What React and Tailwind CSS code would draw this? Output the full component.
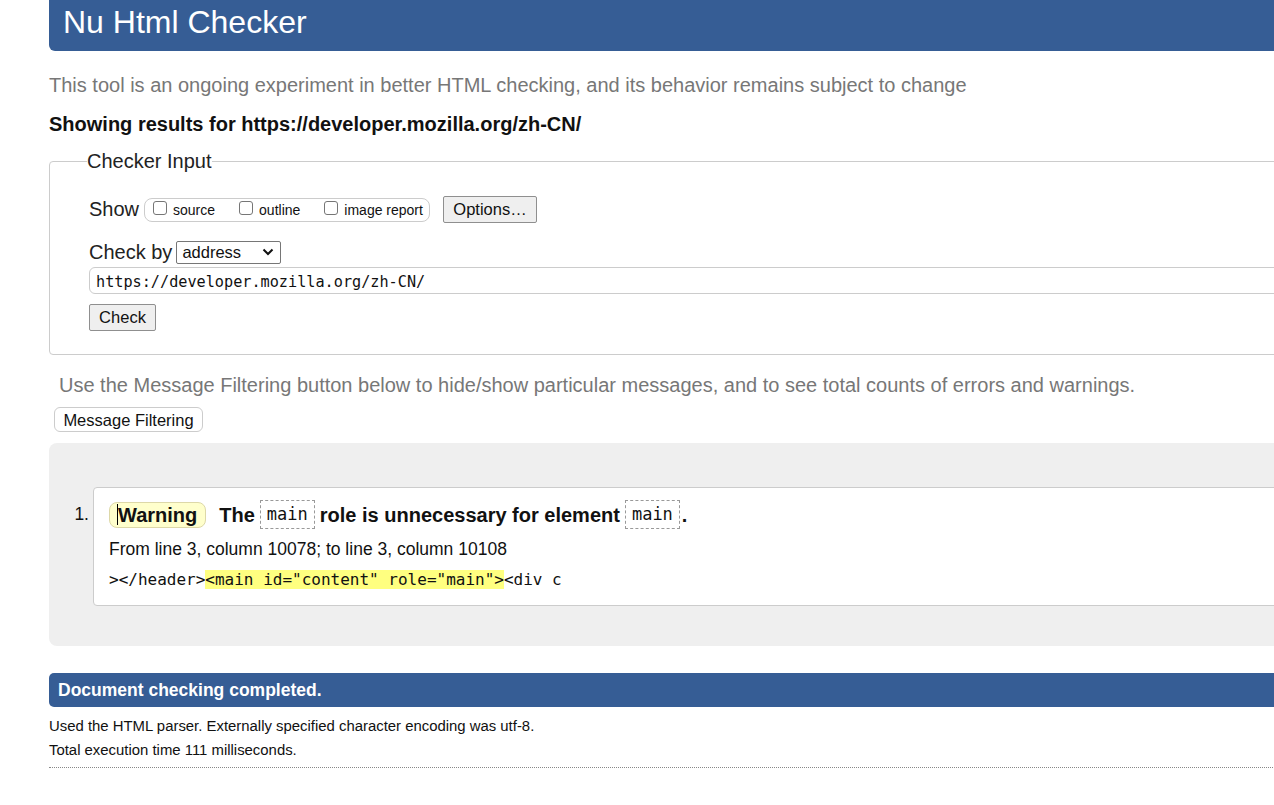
import React from 'react'

const mono = { fontFamily: '"DejaVu Sans Mono", "Liberation Mono", monospace' }

function CodeBox({ children }) {
  return (
    <span
      className="inline-flex items-center h-[29px] px-[6px] mx-[5px] border border-dashed border-[#999] text-[17px] font-normal text-[#111]"
      style={mono}
    >
      {children}
    </span>
  )
}

function Checkbox({ label, className }) {
  return (
    <label className={`flex items-center ${className}`}>
      <span className="w-[14px] h-[14px] border border-[#767676] rounded-[3px] bg-white mr-[6px] -mt-[3px]" />
      <span className="text-[14px] leading-[16px] text-[#111]">{label}</span>
    </label>
  )
}

export default function App() {
  return (
    <div
      className="w-[1274px] h-[805px] overflow-hidden bg-white text-[#111]"
      style={{ fontFamily: '"Liberation Sans", Arial, sans-serif' }}
    >
      <div className="ml-[49px] w-[1400px]">
        {/* header */}
        <header className="h-[51px] bg-[#365d95] rounded-bl-[6px] pl-[14px]">
          <h1 className="text-[32px] leading-[44px] text-white font-normal">Nu Html Checker</h1>
        </header>

        <p className="mt-[22px] text-[20px] leading-[24px] text-[#777]">
          This tool is an ongoing experiment in better HTML checking, and its behavior remains subject to change
        </p>
        <p className="mt-[15px] text-[20px] leading-[24px] font-bold text-[#111]">
          Showing results for https://developer.mozilla.org/zh-CN/
        </p>

        {/* checker input */}
        <fieldset className="mt-[13px] border border-[#ccc] rounded-[4px] pl-[39px] pb-[23px]">
          <legend className="-ml-[2px] text-[20px] leading-[24px] text-[#222]">Checker Input</legend>

          <div className="mt-[23px] flex items-center h-[27px]">
            <span className="text-[20px] leading-[24px] text-[#222] -mt-[2px]">Show</span>
            <div className="ml-[5px] flex items-center h-[24px] w-[286px] border border-[#ccc] rounded-[8px] pl-[8px]">
              <Checkbox label="source" />
              <Checkbox label="outline" className="ml-[24px]" />
              <Checkbox label="image report" className="ml-[24px]" />
            </div>
            <button
              type="button"
              className="ml-[13px] h-[27px] w-[94px] bg-[#efefef] border border-[#8f8f8f] rounded-[2px] text-[16.5px] text-[#111]"
            >
              Options…
            </button>
          </div>

          <div className="mt-[17px] flex items-center h-[24px]">
            <span className="text-[20px] leading-[24px] text-[#222]">Check by</span>
            <div className="ml-[4px] flex items-center justify-between h-[23px] w-[105px] border border-[#767676] rounded-[2px] pl-[5px] pr-[6px]">
              <span className="text-[16.5px] leading-[20px] text-[#111]">address</span>
              <svg width="12" height="8" viewBox="0 0 12 8" fill="none" stroke="#111" strokeWidth="2">
                <path d="M1.5 1.5 L6 6 L10.5 1.5" />
              </svg>
            </div>
          </div>

          <div className="mt-[3px] h-[27px] border border-[#ccc] rounded-[6px] flex items-center pl-[6px] pt-[3px]">
            <span className="text-[15.2px] text-[#111]" style={mono}>https://developer.mozilla.org/zh-CN/</span>
          </div>

          <button
            type="button"
            className="mt-[10px] h-[27px] w-[67px] bg-[#efefef] border border-[#8f8f8f] rounded-[2px] text-[16.5px] text-[#111]"
          >
            Check
          </button>
        </fieldset>

        <p className="mt-[18px] ml-[10px] text-[20px] leading-[24px] text-[#777]">
          Use the Message Filtering button below to hide/show particular messages, and to see total counts of errors and warnings.
        </p>
        <button
          type="button"
          className="mt-[10px] ml-[5px] h-[25px] w-[149px] bg-white border border-[#ccc] rounded-[6px] text-[16.5px] text-[#111]"
        >
          Message Filtering
        </button>

        {/* results */}
        <div className="mt-[10px] bg-[#efefef] rounded-[8px] pt-[44px] pb-[40px]">
          <div className="flex items-start">
            <div className="w-[44px] pr-[4px] text-right text-[17.5px] leading-[29px] mt-[13px] text-[#111]">1.</div>
            <div className="flex-1 bg-white border border-[#ccc] rounded-[4px] pl-[15px] pt-[12px] pb-[15px]">
              <div className="flex items-center h-[29px] text-[20px] font-bold text-[#111]">
                <span className="flex items-center h-[26px] px-[8px] bg-[#ffffcc] border border-[#ddd8a8] rounded-[8px]">
                  <span className="w-px h-[21px] bg-black -ml-[1px]" />
                  Warning
                </span>
                <span className="ml-[13px]">The</span>
                <CodeBox>main</CodeBox>
                <span>role is unnecessary for element</span>
                <CodeBox>main</CodeBox>
                <span className="-ml-[3px]">.</span>
              </div>
              <p className="mt-[8px] text-[17.5px] leading-[24px] text-[#111]">
                From line 3, column 10078; to line 3, column 10108
              </p>
              <p className="mt-[9px] text-[16px] leading-[20px] text-[#111] whitespace-pre" style={mono}>
                {'></header>'}
                <span className="bg-[#ffff80]">{'<main id="content" role="main">'}</span>
                {'<div c'}
              </p>
            </div>
          </div>
        </div>

        {/* footer */}
        <div className="mt-[27px] h-[34px] bg-[#365d95] rounded-l-[5px] pl-[9px] flex items-center">
          <span className="text-[17.5px] font-bold text-white">Document checking completed.</span>
        </div>
        <p className="mt-[7px] text-[14.9px] leading-[24px] text-[#111]">
          Used the HTML parser. Externally specified character encoding was utf-8.
        </p>
        <p className="text-[14.9px] leading-[24px] text-[#111]">Total execution time 111 milliseconds.</p>
        <div className="mt-[5px] border-b border-dotted border-[#888]" />
      </div>
    </div>
  )
}
